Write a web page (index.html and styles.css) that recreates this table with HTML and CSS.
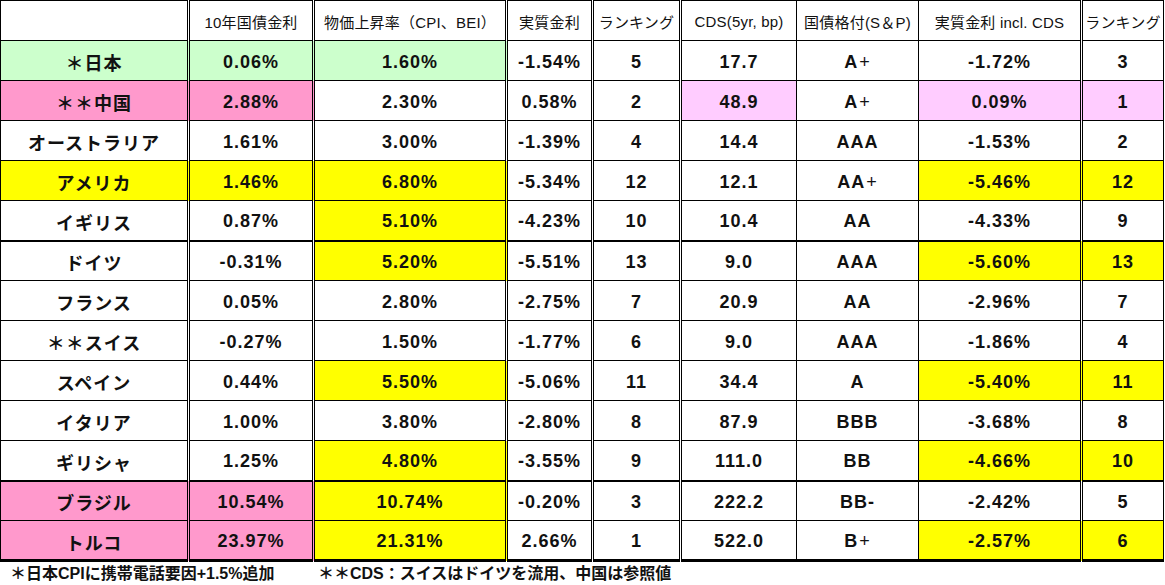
FILE: index.html
```html
<!DOCTYPE html>
<html lang="ja">
<head>
<meta charset="utf-8">
<title>実質金利ランキング</title>
<link rel="stylesheet" href="styles.css">
</head>
<body>
<table class="rates">
  <colgroup>
    <col class="c1"><col class="c2"><col class="c3"><col class="c4"><col class="c5"><col class="c6"><col class="c7"><col class="c8"><col class="c9">
  </colgroup>
  <thead>
    <tr class="head">
      <th class="dbl"></th>
      <th class="dbl">10年国債金利</th>
      <th class="dbl">物価上昇率（CPI、BEI）</th>
      <th class="dbl">実質金利</th>
      <th class="dbl">ランキング</th>
      <th>CDS(5yr, bp)</th>
      <th>国債格付(S＆P)</th>
      <th class="dbl">実質金利 incl. CDS</th>
      <th>ランキング</th>
    </tr>
  </thead>
  <tbody>
    <tr>
      <td class="dbl green">＊日本</td><td class="dbl green">0.06%</td><td class="dbl green">1.60%</td><td class="dbl">-1.54%</td><td class="dbl">5</td><td>17.7</td><td>A<span class="plus">+</span></td><td class="dbl">-1.72%</td><td>3</td>
    </tr>
    <tr>
      <td class="dbl pink">＊＊中国</td><td class="dbl pink">2.88%</td><td class="dbl">2.30%</td><td class="dbl">0.58%</td><td class="dbl">2</td><td class="lpink">48.9</td><td>A<span class="plus">+</span></td><td class="dbl lpink">0.09%</td><td class="lpink">1</td>
    </tr>
    <tr>
      <td class="dbl">オーストラリア</td><td class="dbl">1.61%</td><td class="dbl">3.00%</td><td class="dbl">-1.39%</td><td class="dbl">4</td><td>14.4</td><td>AAA</td><td class="dbl">-1.53%</td><td>2</td>
    </tr>
    <tr>
      <td class="dbl yellow">アメリカ</td><td class="dbl yellow">1.46%</td><td class="dbl yellow">6.80%</td><td class="dbl">-5.34%</td><td class="dbl">12</td><td>12.1</td><td>AA<span class="plus">+</span></td><td class="dbl yellow">-5.46%</td><td class="yellow">12</td>
    </tr>
    <tr>
      <td class="dbl">イギリス</td><td class="dbl">0.87%</td><td class="dbl yellow">5.10%</td><td class="dbl">-4.23%</td><td class="dbl">10</td><td>10.4</td><td>AA</td><td class="dbl">-4.33%</td><td>9</td>
    </tr>
    <tr class="sep">
      <td class="dbl">ドイツ</td><td class="dbl">-0.31%</td><td class="dbl yellow">5.20%</td><td class="dbl">-5.51%</td><td class="dbl">13</td><td>9.0</td><td>AAA</td><td class="dbl yellow">-5.60%</td><td class="yellow">13</td>
    </tr>
    <tr>
      <td class="dbl">フランス</td><td class="dbl">0.05%</td><td class="dbl">2.80%</td><td class="dbl">-2.75%</td><td class="dbl">7</td><td>20.9</td><td>AA</td><td class="dbl">-2.96%</td><td>7</td>
    </tr>
    <tr>
      <td class="dbl">＊＊スイス</td><td class="dbl">-0.27%</td><td class="dbl">1.50%</td><td class="dbl">-1.77%</td><td class="dbl">6</td><td>9.0</td><td>AAA</td><td class="dbl">-1.86%</td><td>4</td>
    </tr>
    <tr>
      <td class="dbl">スペイン</td><td class="dbl">0.44%</td><td class="dbl yellow">5.50%</td><td class="dbl">-5.06%</td><td class="dbl">11</td><td>34.4</td><td>A</td><td class="dbl yellow">-5.40%</td><td class="yellow">11</td>
    </tr>
    <tr>
      <td class="dbl">イタリア</td><td class="dbl">1.00%</td><td class="dbl">3.80%</td><td class="dbl">-2.80%</td><td class="dbl">8</td><td>87.9</td><td>BBB</td><td class="dbl">-3.68%</td><td>8</td>
    </tr>
    <tr>
      <td class="dbl">ギリシャ</td><td class="dbl">1.25%</td><td class="dbl yellow">4.80%</td><td class="dbl">-3.55%</td><td class="dbl">9</td><td>111.0</td><td>BB</td><td class="dbl yellow">-4.66%</td><td class="yellow">10</td>
    </tr>
    <tr class="sep">
      <td class="dbl pink">ブラジル</td><td class="dbl pink">10.54%</td><td class="dbl yellow">10.74%</td><td class="dbl">-0.20%</td><td class="dbl">3</td><td>222.2</td><td>BB-</td><td class="dbl">-2.42%</td><td>5</td>
    </tr>
    <tr class="last">
      <td class="dbl pink">トルコ</td><td class="dbl pink">23.97%</td><td class="dbl yellow">21.31%</td><td class="dbl">2.66%</td><td class="dbl">1</td><td>522.0</td><td>B<span class="plus">+</span></td><td class="dbl yellow">-2.57%</td><td class="yellow">6</td>
    </tr>
  </tbody>
</table>
<div class="notes">
  <span class="note note-first">＊日本CPIに携帯電話要因+1.5%追加</span>
  <span class="note">＊＊CDS：スイスはドイツを流用、中国は参照値</span>
</div>
</body>
</html>
```
FILE: styles.css
```css
html, body {
  margin: 0;
  padding: 0;
  background: #ffffff;
}
body {
  font-family: "Liberation Sans", "Noto Sans CJK JP", sans-serif;
  color: #111111;
  width: 1165px;
  height: 585px;
  overflow: hidden;
}
.rates {
  border-collapse: collapse;
  table-layout: fixed;
  width: 1163px;
  margin-left: 0;
}
.c1 { width: 188px; }
.c2 { width: 125px; }
.c3 { width: 193px; }
.c4 { width: 86px; }
.c5 { width: 88px; }
.c6 { width: 116px; }
.c7 { width: 122px; }
.c8 { width: 163px; }
.c9 { width: 82px; }

.rates th,
.rates td {
  border: 1px solid #000000;
  text-align: center;
  vertical-align: middle;
  padding: 3px 0 0 0;
  white-space: nowrap;
}
.rates tr {
  height: 40px;
}
.rates th {
  font-size: 15px;
  font-weight: normal;
  padding-top: 2px;
  letter-spacing: 0.2px;
}
.rates td {
  font-size: 18px;
  font-weight: bold;
  letter-spacing: 1px;
}
.plus {
  font-weight: normal;
  padding-left: 1px;
}
.rates .dbl {
  border-right: 3px double #000000;
}
.rates tr.sep td {
  border-top: 2px solid #000000;
}
.rates tr.last td {
  border-bottom: 3px solid #000000;
}
.green { background: #ccffcc; }
.pink { background: #ff99cc; }
.lpink { background: #ffccff; }
.yellow { background: #ffff00; }

.notes {
  display: flex;
  font-size: 16px;
  font-weight: bold;
  line-height: 22px;
  padding-left: 10px;
  padding-top: 1px;
}
.note-first {
  width: 308px;
}
```
